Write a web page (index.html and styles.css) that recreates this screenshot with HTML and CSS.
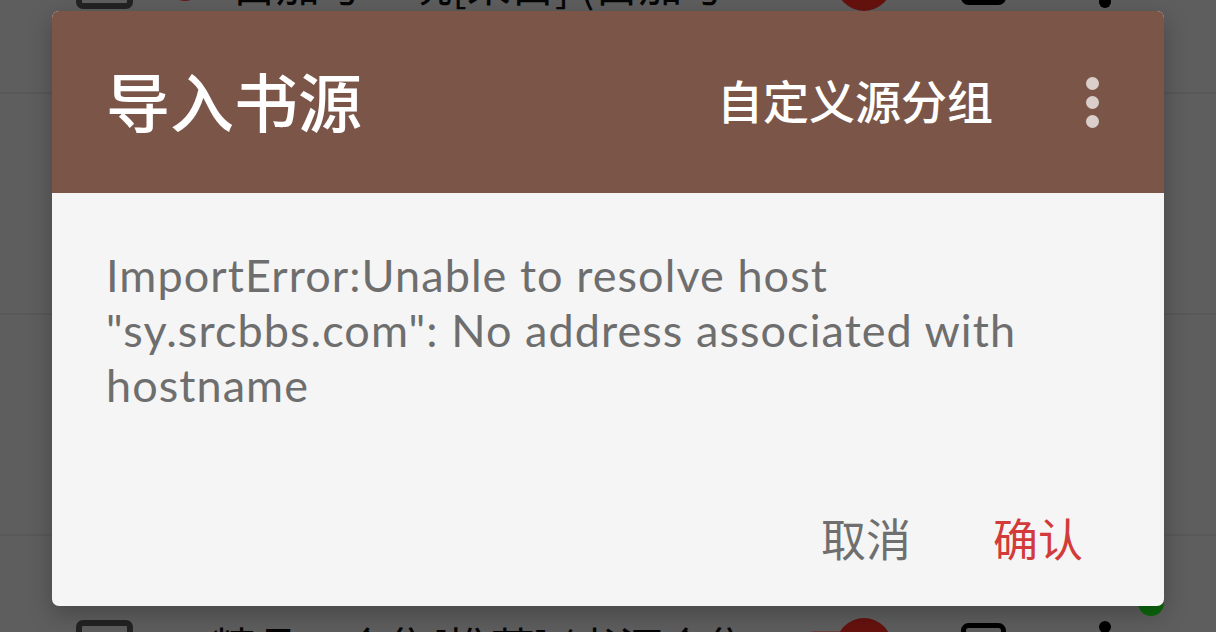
FILE: index.html
```html
<!DOCTYPE html>
<html lang="zh-CN">
<head>
<meta charset="utf-8">
<title>导入书源</title>
<link rel="stylesheet" href="styles.css">
</head>
<body>
<div class="app">
  <ul class="source-list">
    <li class="source-row">
      <span class="checkbox"></span>
      <span class="status-dot"></span>
      <span class="row-title">白加号·玩[采白] (白加号 ···</span>
      <span class="switch"><span class="track"></span><span class="thumb"></span></span>
      <svg class="edit-icon" viewBox="0 0 45 45"><rect x="2.5" y="2.5" width="40" height="40" rx="5" fill="none" stroke="#000" stroke-width="5"/></svg>
      <span class="more-v"><i></i><i></i><i></i></span>
    </li>
    <li class="source-row">
      <span class="checkbox"></span>
      <span class="status-dot"></span>
      <span class="row-title">书香小说[采集] (书香 ···</span>
      <span class="switch"><span class="track"></span><span class="thumb"></span></span>
      <svg class="edit-icon" viewBox="0 0 45 45"><rect x="2.5" y="2.5" width="40" height="40" rx="5" fill="none" stroke="#000" stroke-width="5"/></svg>
      <span class="more-v"><i></i><i></i><i></i></span>
    </li>
    <li class="source-row">
      <span class="checkbox"></span>
      <span class="status-dot"></span>
      <span class="row-title">笔趣阁[精品] (笔趣阁 ···</span>
      <span class="switch"><span class="track"></span><span class="thumb"></span></span>
      <svg class="edit-icon" viewBox="0 0 45 45"><rect x="2.5" y="2.5" width="40" height="40" rx="5" fill="none" stroke="#000" stroke-width="5"/></svg>
      <span class="more-v"><i></i><i></i><i></i></span>
    </li>
    <li class="source-row">
      <span class="checkbox"></span>
      <span class="row-title row-title--nodot">精品·合集[推荐] (书源合集 ···</span>
      <span class="switch"><span class="track"></span><span class="thumb"></span></span>
      <svg class="edit-icon" viewBox="0 0 45 45"><rect x="2.5" y="2.5" width="40" height="40" rx="5" fill="none" stroke="#000" stroke-width="5"/></svg>
      <span class="more-v"><i></i><i></i><i></i></span>
      <span class="online-badge"></span>
    </li>
  </ul>

  <div class="scrim"></div>

  <div class="dialog" role="dialog">
    <div class="dialog-header">
      <h1 class="dialog-title">导入书源</h1>
      <span class="header-action">自定义源分组</span>
      <span class="menu-dots"><i></i><i></i><i></i></span>
    </div>
    <div class="dialog-body">
      <p class="message">ImportError:Unable to resolve host "sy.srcbbs.com": No address associated with hostname</p>
    </div>
    <div class="dialog-actions">
      <button class="btn btn-cancel">取消</button>
      <button class="btn btn-ok">确认</button>
    </div>
  </div>
</div>
</body>
</html>
```

FILE: styles.css
```css
* { box-sizing: border-box; }

html, body {
  margin: 0;
  padding: 0;
}

body {
  width: 1216px;
  height: 632px;
  overflow: hidden;
  background: #ececec;
  font-family: "Noto Sans", "Noto Sans CJK SC", sans-serif;
}

.app {
  position: relative;
  width: 1216px;
  height: 632px;
  overflow: hidden;
}

/* background list */
.source-list {
  list-style: none;
  margin: -127px 0 0;
  padding: 0;
}

.source-row {
  position: relative;
  height: 221px;
  display: flex;
  align-items: center;
  padding-left: 76px;
  padding-right: 61px;
  border-bottom: 2px solid #dcdcdc;
}

.checkbox {
  flex: none;
  width: 57px;
  height: 52px;
  border: 6px solid #585858;
  border-radius: 7px;
}

.status-dot {
  flex: none;
  width: 36px;
  height: 36px;
  margin-left: 34px;
  border-radius: 50%;
  background: #ff3a2e;
}

.row-title {
  flex: 1;
  min-width: 0;
  margin-left: 29px;
  font-family: "Noto Sans CJK SC", sans-serif;
  font-size: 44px;
  color: #111;
  white-space: nowrap;
  overflow: hidden;
}

.row-title--nodot {
  margin-left: 79px;
}

.switch {
  position: relative;
  flex: none;
  width: 92px;
  height: 56px;
  margin-left: 40px;
}

.track {
  position: absolute;
  left: 0;
  top: 13px;
  width: 76px;
  height: 30px;
  border-radius: 15px;
  background: #ff9b96;
}

.thumb {
  position: absolute;
  right: 0;
  top: 0;
  width: 56px;
  height: 56px;
  border-radius: 50%;
  background: #ff2e24;
}

.edit-icon {
  flex: none;
  width: 45px;
  height: 45px;
  margin-left: 69px;
  margin-right: 49px;
}

.more-v {
  flex: none;
  width: 100px;
  display: flex;
  flex-direction: column;
  align-items: center;
  gap: 7px;
}

.more-v i {
  width: 12px;
  height: 12px;
  border-radius: 50%;
  background: #000;
}

.online-badge {
  position: absolute;
  left: 1138px;
  top: 54px;
  width: 26px;
  height: 26px;
  border-radius: 50%;
  background: #20ff20;
}

/* scrim */
.scrim {
  position: absolute;
  inset: 0;
  background: rgba(0, 0, 0, 0.6);
}

/* dialog */
.dialog {
  position: absolute;
  left: 52px;
  top: 11px;
  width: 1112px;
  height: 595px;
  display: flex;
  flex-direction: column;
  background: #f5f5f5;
  border-radius: 7px;
  overflow: hidden;
  box-shadow: 0 8px 24px rgba(0, 0, 0, 0.25);
}

.dialog-header {
  flex: none;
  height: 182px;
  display: flex;
  align-items: center;
  padding: 0 48px 6px 54px;
  background: #7b5648;
  color: #fff;
}

.dialog-title {
  flex: 1;
  margin: 0;
  font-family: "Noto Sans CJK SC", sans-serif;
  font-size: 64px;
  font-weight: 500;
  line-height: 1;
  letter-spacing: 0;
}

.header-action {
  margin-right: 75px;
  font-family: "Noto Sans CJK SC", sans-serif;
  font-size: 46px;
  font-weight: 500;
  line-height: 1;
}

.menu-dots {
  width: 48px;
  margin-top: 6px;
  display: flex;
  flex-direction: column;
  align-items: center;
  gap: 6px;
}

.menu-dots i {
  width: 13px;
  height: 13px;
  border-radius: 50%;
  background: #dacfcb;
}

.dialog-body {
  flex: 1;
  padding: 55px 54px 0;
}

.message {
  margin: 0;
  font-family: "Lato", "Noto Sans", sans-serif;
  font-size: 45px;
  line-height: 55px;
  letter-spacing: 1.06px;
  color: #6e6e6e;
}

.dialog-actions {
  flex: none;
  display: flex;
  justify-content: flex-end;
  gap: 2px;
  padding: 0 41px 19px;
}

.btn {
  height: 100px;
  padding: 0 40px;
  border: none;
  background: none;
  font-family: "Noto Sans CJK SC", sans-serif;
  font-size: 45px;
  line-height: 1;
}

.btn-cancel { color: #6f6f6f; }
.btn-ok { color: #d33a3a; }
```
